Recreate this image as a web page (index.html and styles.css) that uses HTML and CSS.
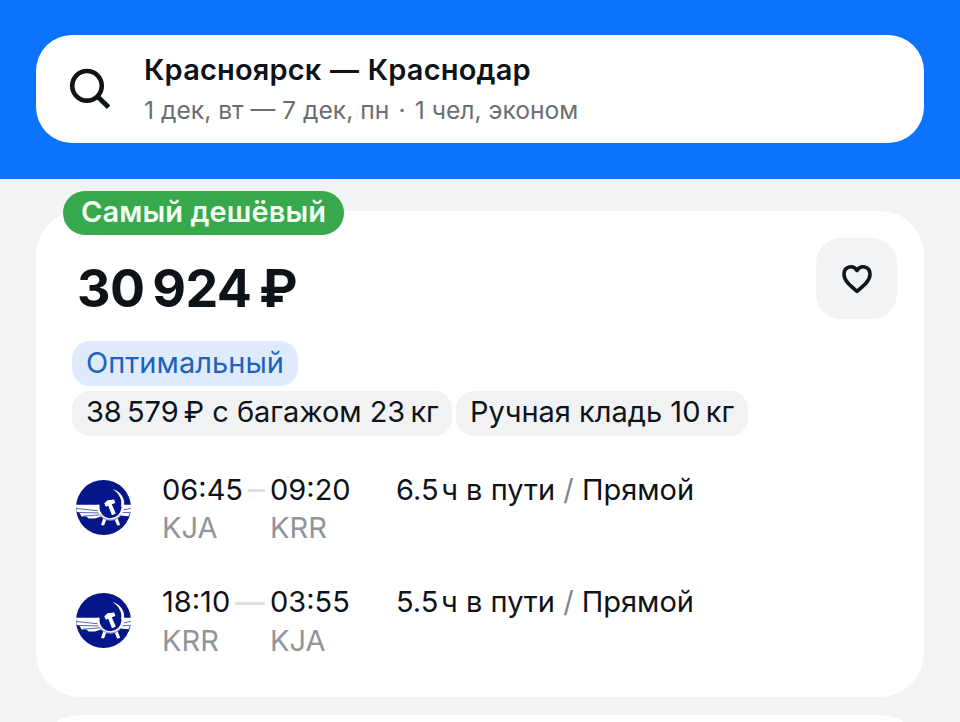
FILE: index.html
```html
<!DOCTYPE html>
<html lang="ru">
<head>
<meta charset="utf-8">
<title>Красноярск — Краснодар</title>
<link rel="stylesheet" href="styles.css">
</head>
<body>
<svg class="defs" width="0" height="0" aria-hidden="true">
  <symbol id="airline" viewBox="0 0 55 55">
    <circle cx="27.500" cy="27.500" r="27.500" fill="#041689"/>
    <path d="M0 24.800H23L25 36.500L19 38.600L12.500 38.400L10.500 36.600H5.500L4 33.500L.5 31.500ZM46 24.800H55V31L53.500 34L52.500 36.300L44 35.500Z" fill="#fff"/>
    <path d="M0 28.500L22.500 30.800M2 32.500L23 32.900M7 36.200L24 34.800M47.500 29.800L55 28.500M46 32.600L54 32.500" fill="none" stroke="#041689" stroke-width=".65"/>
    <circle cx="34.500" cy="27" r="11.800" fill="#041689"/>
    <path d="M22.600 24.800A12.200 12.200 0 0 0 34.500 39.400A12.200 12.200 0 0 0 46.500 27.500" fill="none" stroke="#fff" stroke-width="2.300"/>
    <path d="M24 34.500A12.800 12.800 0 0 0 45 34.500" fill="none" stroke="#041689" stroke-width=".5"/>
    <path d="M36.500 9C46 12 50 20 47.500 28L45 26.500C46.500 19 43 13.500 36.500 9Z" fill="#fff"/>
    <path d="M28.300 23.300L31.500 20.300L38.200 19.600L39.300 23L35.800 24.300L39.800 33.500L36 35.200L32.200 25.800L29.800 26.800Z" fill="#fff"/>
    <path d="M27.200 38.500L30.200 40L28 45.500L25 44.900ZM38.800 40L41.800 38.500L44.200 44.900L41.200 45.500Z" fill="#fff"/>
  </symbol>
</svg>

<header class="header">
  <div class="search">
    <svg class="search-icon" viewBox="0 0 42 42" width="42" height="42">
      <circle cx="18" cy="17.800" r="14.800" fill="none" stroke="#10151a" stroke-width="4.600"/>
      <path d="M28 28L39.600 39.300" stroke="#10151a" stroke-width="4.800"/>
    </svg>
    <div class="search-text">
      <div class="route">Красноярск — Краснодар</div>
      <div class="details">1 дек, вт — 7 дек, пн<span class="dot">·</span>1 чел, эконом</div>
    </div>
  </div>
</header>

<main class="results">
  <article class="ticket">
    <div class="badge"><span>Самый дешёвый</span></div>
    <div class="top">
      <div class="price">30&#8201;924&#8201;₽</div>
      <button class="favorite" aria-label="В избранное">
        <svg viewBox="0 0 32 32" width="32" height="32">
          <path d="M16 7.500C12.500 1.500 3 3 3 11.500C3 17.500 9 22.500 16 28.300C23 22.500 29 17.500 29 11.500C29 3 19.500 1.500 16 7.500Z" fill="none" stroke="#10151a" stroke-width="3.600" stroke-linejoin="round"/>
        </svg>
      </button>
    </div>
    <div class="tags">
      <div class="tag tag-best"><span>Оптимальный</span></div>
      <div class="tag tag-bag"><span>38&#8201;579&#8201;₽ с багажом 23&#8201;кг</span></div>
      <div class="tag tag-hand"><span>Ручная кладь 10&#8201;кг</span></div>
    </div>
    <div class="flights">
      <div class="flight">
        <svg class="logo"><use href="#airline"/></svg>
        <div class="from"><div class="time">06:45<i class="dash"></i></div><div class="code">KJA</div></div>
        <div class="to"><div class="time">09:20</div><div class="code">KRR</div></div>
        <div class="trip">6.5&#8202;ч в пути <em>/</em> Прямой</div>
      </div>
      <div class="flight return">
        <svg class="logo"><use href="#airline"/></svg>
        <div class="from"><div class="time">18:10<i class="dash"></i></div><div class="code">KRR</div></div>
        <div class="to"><div class="time">03:55</div><div class="code">KJA</div></div>
        <div class="trip">5.5&#8202;ч в пути <em>/</em> Прямой</div>
      </div>
    </div>
  </article>
  <article class="ticket next"></article>
</main>
</body>
</html>
```
FILE: styles.css
```css
* { box-sizing: border-box; }
body {
  margin: 0;
  height: 722px;
  overflow: hidden;
  background: #f2f3f5;
  color: #0e131a;
  font-family: Inter, sans-serif;
  font-size: 29px;
  white-space: nowrap;
}
.defs { display: block; }
.header { height: 179px; padding: 35px 36px 36px; background: #0b73fe; }
.search {
  display: flex;
  height: 108px;
  padding-left: 33px;
  border-radius: 36px;
  background: #fff;
}
.search-icon { margin-top: 33px; margin-right: 33px; }
.search-text { padding-top: 17px; }
.route { font-size: 29px; line-height: 36px; font-weight: 600; letter-spacing: .18px; word-spacing: 1px; }
.details { margin-top: 5px; font-size: 24.65px; line-height: 34px; color: #6a6f73; }
.dot { display: inline-block; width: 25.5px; text-align: center; }
.results { height: 543px; padding: 32px 36px 0; overflow: hidden; }
.ticket {
  position: relative;
  height: 486px;
  padding: 27px 27px 0 36px;
  border-radius: 44px;
  background: #fff;
}
.badge {
  position: absolute;
  left: 27px;
  top: -20px;
  width: 281px;
  height: 44px;
  padding-left: 18px;
  border-radius: 22px;
  background: #38a84c;
  color: #f3fff3;
  font-size: 29px;
  font-weight: 600;
  letter-spacing: .1px;
  line-height: 42px;
}
.top { display: flex; justify-content: space-between; height: 103px; }
.price { padding-left: 5px; font-size: 52px; font-weight: 700; line-height: 101px; letter-spacing: -.55px; }
.favorite {
  display: grid;
  place-items: center;
  width: 81px;
  height: 81px;
  padding: 0;
  border: 0;
  border-radius: 25px;
  background: #f2f3f5;
}
.tags { display: flex; flex-wrap: wrap; gap: 5px 4px; }
.tag {
  height: 45px;
  padding-left: 14px;
  border-radius: 18px;
  background: #f1f2f4;
  line-height: 43px;
}
.tag-best { width: 226px; margin-right: 400px; background: #dfebfc; color: #1d62bd; letter-spacing: .05px; }
.tag-bag { width: 380px; line-height: 42px; letter-spacing: -.04px; }
.tag-hand { width: 292px; line-height: 42px; }
.flights { padding-top: 35px; }
.flight {
  display: grid;
  grid-template-columns: 90px 108px 126px 1fr;
  height: 113px;
  line-height: 38px;
}
.logo { width: 55px; height: 55px; margin: 9px 0 0 4px; }
.time { display: flex; align-items: center; }
.return .time { height: 38px; line-height: 36px; }
.return .trip { line-height: 36px; }
.dash { flex: 1; height: 3px; margin: 0 5px; background: #dfe1e3; }
.return .time { align-items: flex-start; }
.return .dash { margin-top: 18px; }
.code { color: #90959a; }
.trip em { color: #7e848a; font-style: normal; }
.next { margin-top: 18px; }
```
